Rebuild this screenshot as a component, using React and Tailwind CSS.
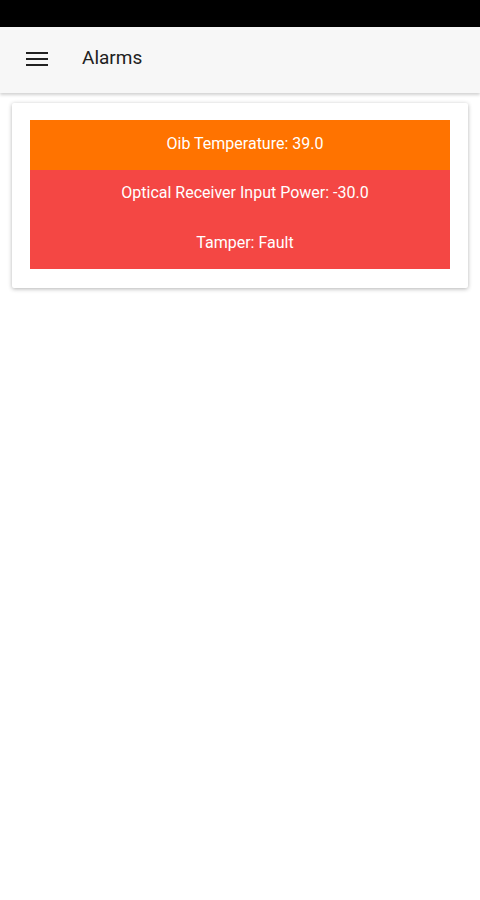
import React from "react";

const alarms = [
  { label: "Oib Temperature: 39.0", level: "warning" },
  { label: "Optical Receiver Input Power: -30.0", level: "critical" },
  { label: "Tamper: Fault", level: "critical" },
];

function App() {
  return (
    <div className="min-h-[900px] bg-white font-['Roboto',sans-serif]">
      <div className="h-[27px] bg-black" />

      <header className="flex h-[66px] items-center bg-[#f7f7f7] pb-[3px] shadow-[0_2px_3px_rgba(0,0,0,0.18)]">
        <button className="ml-[25px] flex h-6 w-6 items-center justify-center text-[#212121]">
          <svg width="22" height="16" viewBox="0 0 22 16">
            <rect x="0" y="1" width="22" height="2" fill="currentColor" />
            <rect x="0" y="7" width="22" height="2" fill="currentColor" />
            <rect x="0" y="13" width="22" height="2" fill="currentColor" />
          </svg>
        </button>
        <h1 className="ml-[33px] text-[19px] text-[#212121]">Alarms</h1>
      </header>

      <div className="mx-[12px] mt-[10px] rounded-[2px] bg-white px-[18px] pt-[17px] pb-[19px] shadow-[0_1px_4px_rgba(0,0,0,0.3)]">
        {alarms.map((a, i) => (
          <div
            key={i}
            className={
              a.level === "warning"
                ? "flex h-[50px] items-center justify-center bg-[#ff7300] pb-[3px] pl-[10px] text-[16px] text-white"
                : "flex h-[49.5px] items-center justify-center bg-[#f44744] pb-[3px] pl-[10px] text-[16px] text-white"
            }
          >
            {a.label}
          </div>
        ))}
      </div>
    </div>
  );
}

export default App;
